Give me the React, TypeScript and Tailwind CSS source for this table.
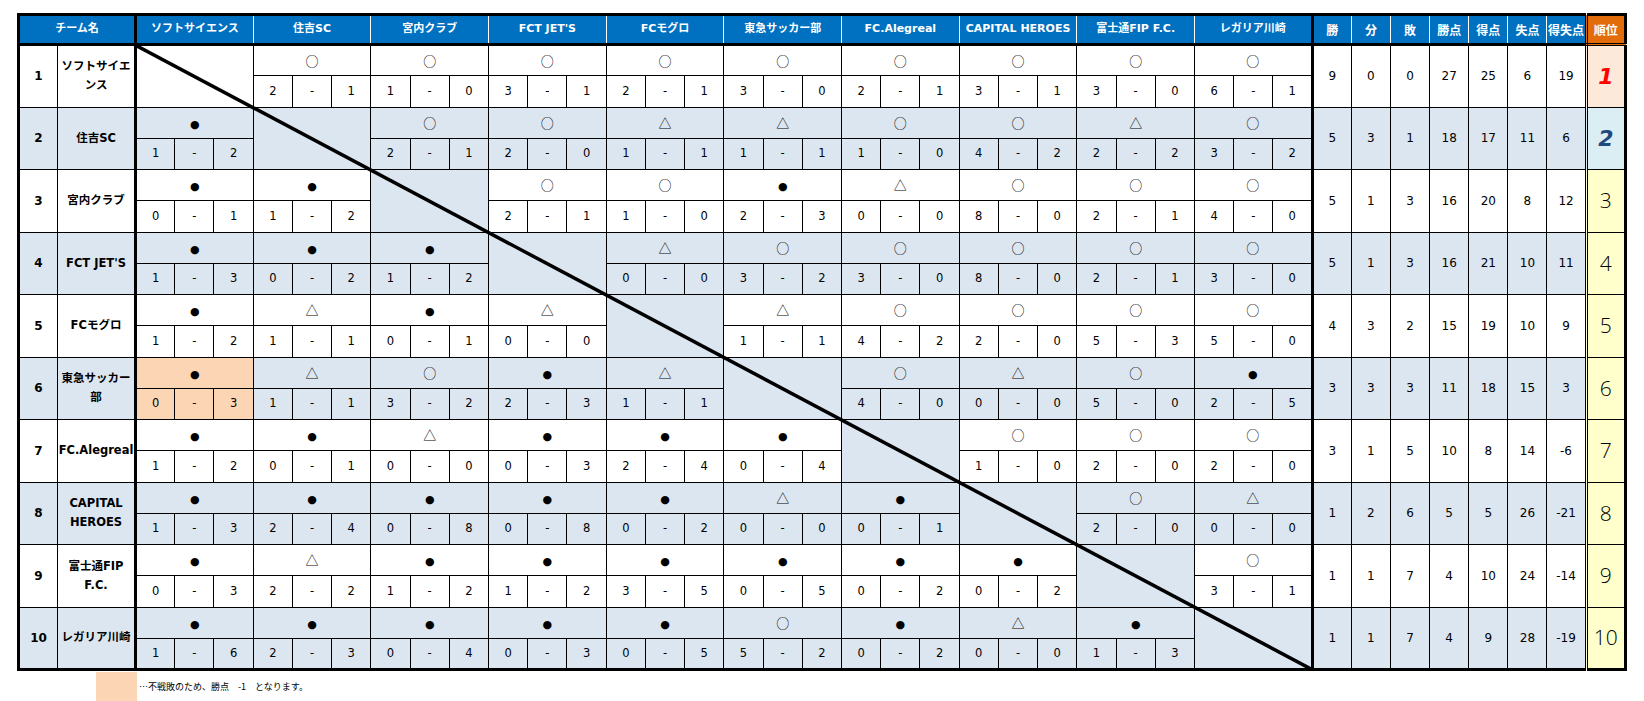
import React from "react";

type Team = { header: string; lines: string[] };

const teams: Team[] = [
  { header: "ソフトサイエンス", lines: ["ソフトサイエ", "ンス"] },
  { header: "住吉SC", lines: ["住吉SC"] },
  { header: "宮内クラブ", lines: ["宮内クラブ"] },
  { header: "FCT JET'S", lines: ["FCT JET'S"] },
  { header: "FCモグロ", lines: ["FCモグロ"] },
  { header: "東急サッカー部", lines: ["東急サッカー", "部"] },
  { header: "FC.Alegreal", lines: ["FC.Alegreal"] },
  { header: "CAPITAL HEROES", lines: ["CAPITAL", "HEROES"] },
  { header: "富士通FIP F.C.", lines: ["富士通FIP", "F.C."] },
  { header: "レガリア川崎", lines: ["レガリア川崎"] },
];

const R: (string | null)[][] = [
  [null, "○2-1", "○1-0", "○3-1", "○2-1", "○3-0", "○2-1", "○3-1", "○3-0", "○6-1"],
  ["●1-2", null, "○2-1", "○2-0", "△1-1", "△1-1", "○1-0", "○4-2", "△2-2", "○3-2"],
  ["●0-1", "●1-2", null, "○2-1", "○1-0", "●2-3", "△0-0", "○8-0", "○2-1", "○4-0"],
  ["●1-3", "●0-2", "●1-2", null, "△0-0", "○3-2", "○3-0", "○8-0", "○2-1", "○3-0"],
  ["●1-2", "△1-1", "●0-1", "△0-0", null, "△1-1", "○4-2", "○2-0", "○5-3", "○5-0"],
  ["●0-3", "△1-1", "○3-2", "●2-3", "△1-1", null, "○4-0", "△0-0", "○5-0", "●2-5"],
  ["●1-2", "●0-1", "△0-0", "●0-3", "●2-4", "●0-4", null, "○1-0", "○2-0", "○2-0"],
  ["●1-3", "●2-4", "●0-8", "●0-8", "●0-2", "△0-0", "●0-1", null, "○2-0", "△0-0"],
  ["●0-3", "△2-2", "●1-2", "●1-2", "●3-5", "●0-5", "●0-2", "●0-2", null, "○3-1"],
  ["●1-6", "●2-3", "●0-4", "●0-3", "●0-5", "○5-2", "●0-2", "△0-0", "●1-3", null],
];

const stats: number[][] = [
  [9, 0, 0, 27, 25, 6, 19],
  [5, 3, 1, 18, 17, 11, 6],
  [5, 1, 3, 16, 20, 8, 12],
  [5, 1, 3, 16, 21, 10, 11],
  [4, 3, 2, 15, 19, 10, 9],
  [3, 3, 3, 11, 18, 15, 3],
  [3, 1, 5, 10, 8, 14, -6],
  [1, 2, 6, 5, 5, 26, -21],
  [1, 1, 7, 4, 10, 24, -14],
  [1, 1, 7, 4, 9, 28, -19],
];

const statHeaders = ["勝", "分", "敗", "勝点", "得点", "失点", "得失点"];

function Sym({ s }: { s: string }) {
  if (s === "●")
    return <span className="font-['DejaVu_Sans'] text-[11px] text-black">●</span>;
  if (s === "○")
    return <span className="font-['Noto_Sans_CJK_JP'] text-[13px] text-black">○</span>;
  return <span className="font-['Noto_Sans_CJK_JP'] text-[13px] text-black">△</span>;
}

function rankCls(i: number) {
  if (i === 0)
    return "bg-[#FDE9D9] text-[#FF0000] font-bold italic text-[22px] font-['DejaVu_Sans']";
  if (i === 1)
    return "bg-[#DAEEF3] text-[#1F497D] font-bold italic text-[22px] font-['DejaVu_Sans']";
  return "bg-[#FFFFCC] text-black font-light text-[21px] font-['Open_Sans']";
}

function TeamRows({ i }: { i: number }) {
  const bg = i % 2 === 0 ? "bg-white" : "bg-[#DCE6F1]";
  const row = R[i];
  return (
    <>
      <tr className="h-[31.25px]">
        <td rowSpan={2} className={`${bg} border border-black text-[12px] font-bold`}>
          {i + 1}
        </td>
        <td
          rowSpan={2}
          className={`${bg} border border-black border-r-[3px] text-[11.5px] font-bold leading-[19px]`}
        >
          {teams[i].lines.map((l, k) => (
            <div key={k} className="whitespace-nowrap">
              {l}
            </div>
          ))}
        </td>
        {row.map((cell, j) =>
          cell === null ? (
            <td
              key={j}
              rowSpan={2}
              colSpan={3}
              className={`${i === 0 ? "bg-white" : "bg-[#DCE6F1]"} border border-black`}
            />
          ) : (
            <td
              key={j}
              colSpan={3}
              className={`${i === 5 && j === 0 ? "bg-[#FCD5B4]" : bg} border border-black`}
            >
              <Sym s={cell[0]} />
            </td>
          )
        )}
        {stats[i].map((v, k) => (
          <td
            key={`s${k}`}
            rowSpan={2}
            className={`${bg} border border-black text-[12px] ${k === 0 ? "border-l-[3px]" : ""}`}
          >
            {v}
          </td>
        ))}
        <td
          rowSpan={2}
          className={`${rankCls(i)} border border-black border-l-[3px] border-double`}
        >
          {i + 1}
        </td>
      </tr>
      <tr className="h-[31.25px]">
        {row.map((cell, j) => {
          if (cell === null) return null;
          const c = i === 5 && j === 0 ? "bg-[#FCD5B4]" : bg;
          return (
            <React.Fragment key={j}>
              <td className={`${c} border border-black text-[11.5px]`}>{cell[1]}</td>
              <td className={`${c} border border-black text-[11.5px]`}>-</td>
              <td className={`${c} border border-black text-[11.5px]`}>{cell[3]}</td>
            </React.Fragment>
          );
        })}
      </tr>
    </>
  );
}

export default function App() {
  const subCols = Array.from({ length: 30 });
  return (
    <div className="w-[1644px] h-[701px] overflow-hidden bg-white pt-[13px] pl-[17px] font-['DejaVu_Sans','Noto_Sans_CJK_JP',sans-serif] text-black">
      <div className="relative w-[1610px]">
        <table className="w-[1610px] table-fixed border-collapse border-[3px] border-black text-center align-middle">
          <colgroup>
            <col className="w-[39px]" />
            <col className="w-[78px]" />
            {subCols.map((_, k) => (
              <col key={k} className="w-[39.23px]" />
            ))}
            {statHeaders.map((_, k) => (
              <col key={`c${k}`} className="w-[39.14px]" />
            ))}
            <col className="w-[39px]" />
          </colgroup>
          <thead>
            <tr className="h-[30px]">
              <th
                colSpan={2}
                className="bg-[#0070C0] text-white text-[11px] font-bold border border-white border-r-[3px] border-r-black border-b-[3px] border-b-black border-t-black"
              >
                チーム名
              </th>
              {teams.map((t, k) => (
                <th
                  key={k}
                  colSpan={3}
                  className="bg-[#0070C0] text-white text-[11px] font-bold border border-white border-b-[3px] border-b-black border-t-black whitespace-nowrap"
                >
                  {t.header}
                </th>
              ))}
              {statHeaders.map((h, k) => (
                <th
                  key={`h${k}`}
                  className={`bg-[#0070C0] text-white text-[12px] font-bold border border-white border-b-[3px] border-b-black border-t-black whitespace-nowrap font-['Noto_Sans_CJK_JP'] ${
                    k === 0 ? "border-l-[3px] border-l-black" : ""
                  }`}
                >
                  {h}
                </th>
              ))}
              <th className="bg-[#E26B0A] text-white text-[12px] font-bold border border-black border-l-[3px] border-double border-b-[3px] font-['Noto_Sans_CJK_JP']">
                順位
              </th>
            </tr>
          </thead>
          <tbody>
            {teams.map((_, i) => (
              <TeamRows key={i} i={i} />
            ))}
          </tbody>
        </table>
        <svg
          className="absolute left-[120px] top-[33px] w-[1174px] h-[623px] pointer-events-none"
          viewBox="0 0 1174 623"
          preserveAspectRatio="none"
        >
          <line x1="0" y1="0" x2="1174" y2="623" stroke="#000" strokeWidth="3.5" />
        </svg>
      </div>
      <div className="flex items-center pl-[79px] mt-[1px]">
        <div className="w-[41px] h-[30px] bg-[#FCD5B4]" />
        <div className="ml-[2px] text-[9px] font-['Noto_Sans_CJK_JP'] whitespace-nowrap">
          …不戦敗のため、勝点　-1　となります。
        </div>
      </div>
    </div>
  );
}
